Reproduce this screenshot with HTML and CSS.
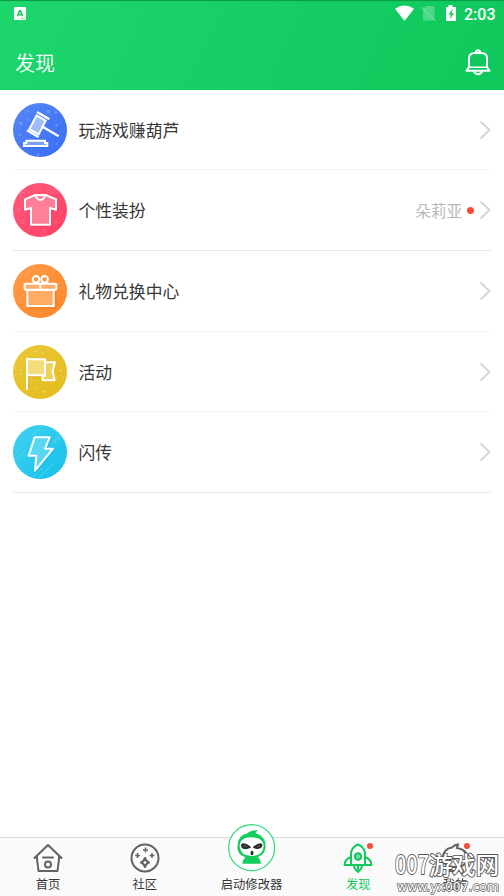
FILE: index.html
```html
<!DOCTYPE html>
<html lang="zh-CN">
<head>
<meta charset="utf-8">
<title>发现</title>
<link rel="stylesheet" href="styles.css">
</head>
<body>
<div class="app">
  <header class="header">
    <div class="status">
      <svg class="status-app" viewBox="0 0 12 13"><rect width="12" height="13" rx="1" fill="#fff"/><path d="M3.500 9.300 5.600 3.800h.9l2.100 5.500M4.400 7.700h3.200" fill="none" stroke="#22cc68" stroke-width="1.700"/><path d="M6.500 11.400H11" stroke="#6edb99" stroke-width=".8"/></svg>
      <svg class="status-icons" viewBox="0 0 62 17">
        <path d="M0 3.800Q9.500-3 19 3.800L9.500 16Z" fill="#fff"/>
        <path d="M28 4l3.500-3H38q1.500 0 1.500 1.500V14q0 1.500-1.500 1.500H29.500Q28 15.500 28 14Z" fill="#fff" opacity=".25"/>
        <path d="M27 2.500 40.500 16" stroke="#67df93" stroke-width="1.200"/>
        <path d="M51 2h2.500V0h4v2H61v14H51Z" fill="#fff"/>
        <path d="M57.800 3.800 53.300 9.600h2.500l-.9 4.700 4-6.100h-2.300Z" fill="#11c95e"/>
      </svg>
      <span class="clock">2:03</span>
    </div>
    <div class="titlebar">
      <h1>发现</h1>
      <svg class="bell" viewBox="0 0 26 27"><g fill="none" stroke="#fff" stroke-width="2" stroke-linejoin="round" stroke-linecap="round"><path d="M4 18V9.500Q4 4 9.500 4h7Q22 4 22 9.500V18l2.500 3.800h-23Z"/><path d="M4 18.300h18" stroke-width="1.500"/><path d="M11 3.200a2 2 0 0 1 4 0M9 22.800q4 5 8 0"/></g></svg>
    </div>
  </header>

  <main class="list">
    <a class="row row-light">
      <svg class="badge" viewBox="39 24 162 162">
        <defs><linearGradient id="blue" x2="1" y2="1"><stop stop-color="#5588f6"/><stop offset="1" stop-color="#396cf5"/></linearGradient></defs>
        <circle cx="120" cy="105" r="81" fill="url(#blue)"/>
        <g fill="#88aafa" opacity=".6"><circle cx="62" cy="85" r="5"/><circle cx="84" cy="49" r="3"/><circle cx="145" cy="50" r="5"/><circle cx="168" cy="52" r="4"/><circle cx="169" cy="91" r="4"/><circle cx="59" cy="120" r="4"/><circle cx="171" cy="147" r="3"/><circle cx="114" cy="179" r="4"/><circle cx="82" cy="74" r="3"/></g>
        <g fill="none" stroke="#244fc5" stroke-width="6" opacity=".2" transform="translate(3 4)"><path d="M112 52l36 21M82 106l33 21M133 98l43 26M69 153h74"/></g>
        <path d="M110 61 137 77 116 118 88 102Z" fill="#a1bcfb" stroke="#fff" stroke-width="6"/>
        <path d="M111 51l37 22M81 106l35 21M129 96l47 28" fill="none" stroke="#fff" stroke-width="7"/>
        <path d="M72 153v-9h7v-7h56v7h7v9Z" fill="#7da1f9" stroke="#fff" stroke-width="6"/>
      </svg>
      <span class="label">玩游戏赚葫芦</span>
      <svg class="chevron" viewBox="0 0 12 20"><path d="M1.500 1.500 10.500 10 1.500 18.500"/></svg>
    </a>
    <a class="row">
      <svg class="badge" viewBox="39 266 162 162">
        <defs><linearGradient id="red" x2="1" y2="1"><stop stop-color="#ff5a7c"/><stop offset="1" stop-color="#ff3e64"/></linearGradient></defs>
        <circle cx="120" cy="347" r="81" fill="url(#red)"/>
        <g fill="none" stroke="#ff7893" stroke-width="3" opacity=".6"><circle cx="67" cy="300" r="7"/><circle cx="146" cy="283" r="4"/><circle cx="164" cy="292" r="8"/><circle cx="57" cy="345" r="5"/><circle cx="68" cy="382" r="5"/><circle cx="131" cy="418" r="7"/><circle cx="169" cy="385" r="5"/></g>
        <path d="M105 307 76 318v28h18v48h58v-48h18v-28l-31-13q-17 18-34 2Z" fill="none" stroke="#c72346" stroke-width="6" opacity=".25"/>
        <path d="M103 303 75 315v31l18-5v50h57v-50l18 5v-31l-28-12Z" fill="#ff7f98" stroke="#fff" stroke-width="6" stroke-linejoin="round"/>
        <path d="M105 303q16 28 32 0Z" fill="#ff6886" stroke="#fff" stroke-width="6"/>
      </svg>
      <span class="label">个性装扮</span>
      <span class="hint">朵莉亚</span><i class="dot"></i>
      <svg class="chevron" viewBox="0 0 12 20"><path d="M1.500 1.500 10.500 10 1.500 18.500"/></svg>
    </a>
    <a class="row row-light">
      <svg class="badge" viewBox="39 27 162 162">
        <defs><linearGradient id="orange" x2="1" y2="1"><stop stop-color="#ff9c4a"/><stop offset="1" stop-color="#ff8526"/></linearGradient></defs>
        <circle cx="120" cy="108" r="81" fill="url(#orange)"/>
        <path d="M59 130l31-31M76 64l22-22M147 167l20-20M90 43l12-9M154 51h10m-5-5v10M173 84h8M60 84h8M62 138h7M118 174h10M92 59h7" stroke="#ffb578" stroke-width="2" opacity=".6"/>
        <path d="M84 109h83v50H85" fill="none" stroke="#ca6512" stroke-width="5" opacity=".25"/>
        <path d="M82 105h79v48H82Z" fill="#ffab66" stroke="#fff" stroke-width="6"/>
        <rect x="74" y="86" width="95" height="18" rx="2" fill="#ffad68" stroke="#fff" stroke-width="6"/>
        <path d="M121 83v21" stroke="#fff" stroke-width="6"/>
        <g fill="#ff9b4c" stroke="#fff" stroke-width="6"><circle cx="108" cy="73" r="10"/><circle cx="134" cy="73" r="10"/></g>
      </svg>
      <span class="label">礼物兑换中心</span>
      <svg class="chevron" viewBox="0 0 12 20"><path d="M1.500 1.500 10.500 10 1.500 18.500"/></svg>
    </a>
    <a class="row row-light">
      <svg class="badge" viewBox="39 269 162 162">
        <defs><linearGradient id="gold" x2="1" y2="1"><stop stop-color="#eac83b"/><stop offset="1" stop-color="#e4bb1a"/></linearGradient></defs>
        <circle cx="120" cy="350" r="81" fill="url(#gold)"/>
        <g stroke="#f5df80" stroke-width="3" opacity=".7"><path d="M102 289h10m-5-5v10M125 293h8M125 409h10m-5-5v10M106 396h8M178 345h8m-4-4v8M59 356h8m-4-4v8"/><circle cx="55" cy="336" r="10" fill="none" stroke-dasharray="3 5"/><circle cx="181" cy="368" r="10" fill="none" stroke-dasharray="3 5"/></g>
        <path d="M84 400v-37h52v14h29" fill="none" stroke="#a28612" stroke-width="5" opacity=".25"/>
        <path d="M135 321h30l-7 27 6 27h-36v-14h7Z" fill="#eed25d" stroke="#fff" stroke-width="6" stroke-linejoin="round"/>
        <path d="M81 311h54v49H81" fill="#f2dc7c"/>
        <path d="M81 307v96M81 312h54v48H81" fill="none" stroke="#fff" stroke-width="6"/>
      </svg>
      <span class="label">活动</span>
      <svg class="chevron" viewBox="0 0 12 20"><path d="M1.500 1.500 10.500 10 1.500 18.500"/></svg>
    </a>
    <a class="row">
      <svg class="badge" viewBox="39 76 162 162">
        <defs><linearGradient id="cyan" x2="1" y2="1"><stop stop-color="#44d2f1"/><stop offset="1" stop-color="#13c1e9"/></linearGradient></defs>
        <circle cx="120" cy="157" r="81" fill="url(#cyan)"/>
        <path d="M97 106l28-27M161 131l24-22M157 131l24-27M47 181l28-27M103 229l24-24M116 234l44-41" stroke="#83e2f6" stroke-width="2" opacity=".75"/>
        <path d="M107 117h45l-14 34h24l-54 66 4-45H89Z" fill="none" stroke="#087fae" stroke-width="6" opacity=".15"/>
        <path d="M104 113h45l-14 34h24l-54 66 4-45H86Z" fill="#5ad5f2" stroke="#fff" stroke-width="6" stroke-linejoin="round"/>
      </svg>
      <span class="label">闪传</span>
      <svg class="chevron" viewBox="0 0 12 20"><path d="M1.500 1.500 10.500 10 1.500 18.500"/></svg>
    </a>
  </main>

  <nav class="tabs">
    <a class="tab">
      <svg class="tab-icon" viewBox="0 0 30 30"><g fill="none" stroke="#626262" stroke-width="2" stroke-linecap="round" stroke-linejoin="round"><path d="M1.500 15 15 2l13.500 13M4 13v3L5.500 28h19L26 16v-3M10 14.500h10"/><circle cx="15" cy="21.500" r="3"/></g></svg>
      <span>首页</span>
    </a>
    <a class="tab">
      <svg class="tab-icon" viewBox="0 0 30 30"><circle cx="15" cy="15" r="13.500" fill="none" stroke="#626262" stroke-width="2"/><path d="M15 15q1 3.500 4 4.500-3 1-4 4.500-1-3.500-4-4.500 3-1 4-4.500Z" fill="none" stroke="#626262" stroke-width="2.200" stroke-linejoin="round"/><path d="M15.500 4.500v5M13 7h5M7.500 10v5M5.200 12.500h4.700M22 10v5M19.700 12.500h4.700" stroke="#626262" stroke-width="1.500"/></svg>
      <span>社区</span>
    </a>
    <a class="tab tab-wide">
      <svg class="mascot" viewBox="83 27 144 144">
        <circle cx="154" cy="98" r="69" fill="#fff" stroke="#2bdb77" stroke-width="3.500"/>
        <path d="M111 95q0-35 31-40 7-9 30-9l-7 9q31 8 31 40-2 33-42 33-42 0-43-33Z" fill="#11ce5c"/>
        <path d="M118 94q0-27 36-27t36 27q-2 29-36 29t-36-29Z" fill="#fff"/>
        <path d="M122 92q0-7 9-7 10 2 22 12-10 7-22 5-9-3-9-10ZM157 97q12-11 23-12 8 1 6 8-4 9-16 9-8-1-13-5Z" fill="#292c2a"/>
        <path d="m129 92 10 3m31 0 8-3" stroke="#8b8d8c" stroke-width="2"/>
        <ellipse cx="155" cy="114" rx="4.500" ry="7" fill="#292c2a"/>
        <path d="M126 146q3-20 17-23 11 6 23 0 13 4 16 23Z" fill="#11ce5c"/>
      </svg>
      <span>启动修改器</span>
    </a>
    <a class="tab tab-active">
      <svg class="tab-icon" viewBox="0 0 30 30"><g fill="none" stroke="#12c95d" stroke-width="2" stroke-linejoin="round"><path d="M8 22V10q1-6 7-8.500 6 2.500 7 8.500v12ZM8 14q-6 2-6.500 8H8M22 14q6 2 6.500 8H22M11 22q0 4 4 7 4-3 4-7M15 23v4"/><circle cx="15" cy="13.500" r="3.200" fill="#7bd99f"/></g></svg>
      <span>发现</span><i class="tab-dot"></i>
    </a>
    <a class="tab">
      <svg class="tab-icon" viewBox="0 0 30 30"><g fill="none" stroke="#626262" stroke-width="2"><path d="M3 15q0-9 9-10.500 2-2.500 6-3l-1 3.500q10 1.500 10 10 0 9-12 9T3 15ZM7 28q1-4 5-4h6q4 0 5 4Z"/></g><path d="m8 13 6 3-5 1ZM22 13l-6 3 5 1Z" fill="#626262"/></svg>
      <span>我的</span><i class="tab-dot"></i>
    </a>
  </nav>
  <svg class="watermark" viewBox="0 0 112 52">
    <text class="mark-digits" x="3" y="30" textLength="34" lengthAdjust="spacingAndGlyphs">007</text>
    <text class="mark-name" x="37" y="30" textLength="70" lengthAdjust="spacingAndGlyphs">游戏网</text>
    <text class="mark-url" x="5" y="47" textLength="102" lengthAdjust="spacingAndGlyphs">www.yx007.com</text>
  </svg>
</div>
</body>
</html>
```
FILE: styles.css
```css
* { box-sizing: border-box; }
body {
  margin: 0;
  background: #fff;
  color: #383838;
  font-family: "Noto Sans CJK SC", sans-serif;
}
svg { display: block; flex: none; }
.app {
  position: relative;
  display: flex;
  flex-direction: column;
  width: 504px;
  height: 896px;
  overflow: hidden;
}
.header {
  height: 89.8px;
  flex: none;
  background: linear-gradient(115deg, #1dd66c, #0fc85c);
  box-shadow: inset 0 2px 1px -1px #0b9a48;
  color: #fff;
}
.status {
  display: flex;
  align-items: center;
  height: 28px;
  padding: 0 9px 0 14px;
}
.status-app { width: 12px; height: 13px; margin-top: -1px; }
.status-icons { width: 62px; height: 17px; margin: -1px 0 0 auto; }
.clock {
  margin-left: 7px;
  width: 31px;
  padding-top: 1px;
  font: 500 16px/20px Roboto, sans-serif;
}
.titlebar {
  display: flex;
  align-items: center;
  justify-content: space-between;
  height: 61px;
  padding: 8px 13px 0 15px;
}
h1 { margin: 0; font-size: 20px; font-weight: 350; line-height: 28px; }
.bell { width: 26px; height: 27px; }
.list { flex: 1; padding: 0 13px; }
.row {
  display: flex;
  align-items: center;
  height: 80.64px;
  border-bottom: 1px solid #e9e9e9;
  padding-top: .3px;
}
.row-light { border-color: #f4f4f4; }
.badge { width: 54px; height: 54px; }
.label {
  flex: 1;
  margin-left: 11.5px;
  font-size: 16.8px;
  line-height: 24px;
}
.hint { color: #b8b8b8; font-size: 15.6px; line-height: 22px; }
.dot {
  width: 7px;
  height: 7px;
  margin: 0 5px 0 5px;
  border-radius: 50%;
  background: #fb4c38;
}
.chevron { width: 12px; height: 20px; }
.chevron path { fill: none; stroke: #d5d5d5; stroke-width: 2; }
.tabs {
  display: flex;
  justify-content: space-between;
  height: 59px;
  padding: 0 25px 0 24px;
  border-top: 1px solid #dedede;
  background: #fafafa;
}
.tab {
  position: relative;
  display: flex;
  flex-direction: column;
  align-items: center;
  width: 48px;
  padding-top: 5px;
  font-size: 12.3px;
  line-height: 18px;
}
.tab span { margin-top: 2px; white-space: nowrap; }
.tab-icon { width: 30px; height: 30px; }
.tab-wide { width: 68px; padding: 0; }
.mascot { width: 48px; height: 48px; margin-top: -14px; }
.tab-wide span { margin-top: 3px; }
.tab-active { color: #12c95d; }
.tab-dot {
  position: absolute;
  top: 5px;
  right: 9px;
  width: 6px;
  height: 6px;
  border-radius: 50%;
  background: #f44d38;
}
.watermark {
  position: absolute;
  right: 0;
  bottom: 0;
  width: 112px;
  height: 52px;
  overflow: visible;
}
.watermark text {
  fill: #fff;
  stroke: #555;
  stroke-width: 1.8px;
  stroke-linejoin: round;
  paint-order: stroke;
}
.mark-digits { font-size: 25px; font-weight: 500; }
.mark-name { font-size: 23.3px; font-weight: 500; }
.watermark .mark-url {
  font: 12.5px "DejaVu Sans", sans-serif;
  stroke: #666;
  stroke-width: 1.5px;
}
```
